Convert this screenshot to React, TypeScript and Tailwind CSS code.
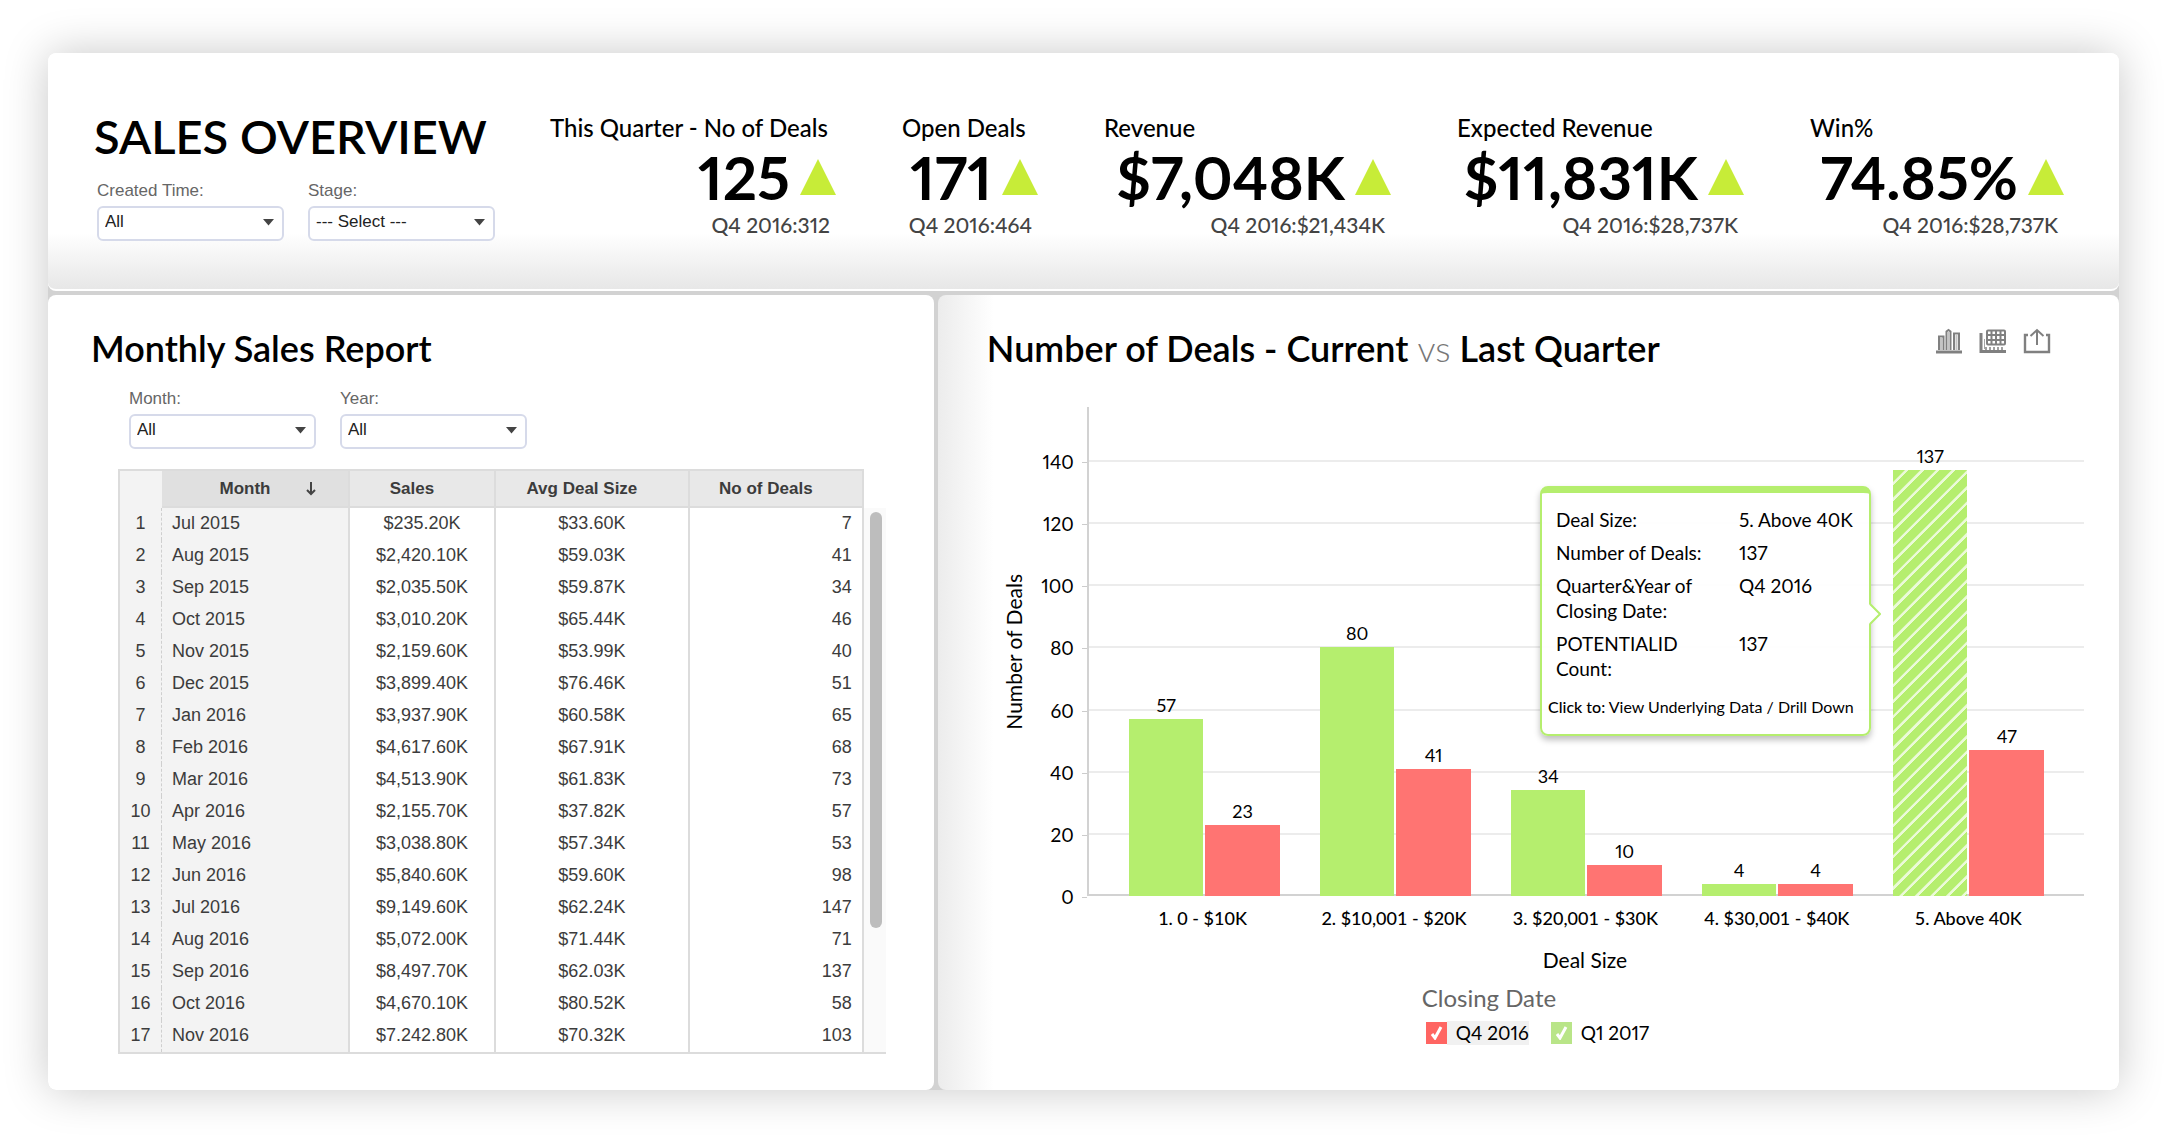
import React from "react";

type Kpi = { label: string; value: string; previous: string; width: string };

const kpis: Kpi[] = [
  { label: "This Quarter - No of Deals", value: "125", previous: "Q4 2016:312", width: "w-[286px]" },
  { label: "Open Deals", value: "171", previous: "Q4 2016:464", width: "w-[136px]" },
  { label: "Revenue", value: "$7,048K", previous: "Q4 2016:$21,434K", width: "w-[287px]" },
  { label: "Expected Revenue", value: "$11,831K", previous: "Q4 2016:$28,737K", width: "w-[287px]" },
  { label: "Win%", value: "74.85%", previous: "Q4 2016:$28,737K", width: "w-[254px]" },
];

const rows: [string, string, string, number][] = [
  ["Jul 2015", "$235.20K", "$33.60K", 7],
  ["Aug 2015", "$2,420.10K", "$59.03K", 41],
  ["Sep 2015", "$2,035.50K", "$59.87K", 34],
  ["Oct 2015", "$3,010.20K", "$65.44K", 46],
  ["Nov 2015", "$2,159.60K", "$53.99K", 40],
  ["Dec 2015", "$3,899.40K", "$76.46K", 51],
  ["Jan 2016", "$3,937.90K", "$60.58K", 65],
  ["Feb 2016", "$4,617.60K", "$67.91K", 68],
  ["Mar 2016", "$4,513.90K", "$61.83K", 73],
  ["Apr 2016", "$2,155.70K", "$37.82K", 57],
  ["May 2016", "$3,038.80K", "$57.34K", 53],
  ["Jun 2016", "$5,840.60K", "$59.60K", 98],
  ["Jul 2016", "$9,149.60K", "$62.24K", 147],
  ["Aug 2016", "$5,072.00K", "$71.44K", 71],
  ["Sep 2016", "$8,497.70K", "$62.03K", 137],
  ["Oct 2016", "$4,670.10K", "$80.52K", 58],
  ["Nov 2016", "$7.242.80K", "$70.32K", 103],
];

const groups = [
  { name: "1. 0 - $10K", green: 57, red: 23 },
  { name: "2. $10,001 - $20K", green: 80, red: 41 },
  { name: "3. $20,001 - $30K", green: 34, red: 10 },
  { name: "4. $30,001 - $40K", green: 4, red: 4 },
  { name: "5. Above 40K", green: 137, red: 47, active: true },
];

const ticks = [0, 20, 40, 60, 80, 100, 120, 140];

/* Height in pixels of a value on the chart's vertical scale. */
const scaleY = (v: number) => Math.round((v * 435) / 140);

function Filter({ id, label, value }: { id: string; label: string; value: string }) {
  return (
    <div className="flex w-[187px] flex-col font-['Liberation_Sans',sans-serif] text-[17px]">
      <label htmlFor={id} className="pb-[3px] leading-6 text-[#666]">
        {label}
      </label>
      <div className="relative">
        <select
          id={id}
          defaultValue={value}
          className="block h-[35px] w-full appearance-none rounded-md border-2 border-[#d6daea] bg-white pb-1 pl-[6px] text-[17px] text-[#222]"
        >
          <option value={value}>{value}</option>
        </select>
        <svg className="pointer-events-none absolute top-[13px] right-[10px] h-[7px] w-[11px]" viewBox="0 0 11 7" aria-hidden="true">
          <path d="M0 0H11L5.5 6.5Z" fill="#444" />
        </svg>
      </div>
    </div>
  );
}

function KpiBlock({ kpi }: { kpi: Kpi }) {
  return (
    <div className={`flex shrink-0 flex-col ${kpi.width}`}>
      <div className="text-[24px] leading-7 font-medium whitespace-nowrap">{kpi.label}</div>
      <div className="flex items-center justify-end gap-[10px] whitespace-nowrap">
        <span className="text-[60px] leading-[70px] font-bold proportional-nums">{kpi.value}</span>
        <svg className="h-9 w-9 shrink-0" viewBox="0 0 36 36" role="img" aria-label="Up">
          <path d="M18 0L36 36H0Z" fill="#c7ec38" />
        </svg>
      </div>
      <div className="pr-[6px] text-right text-[21px] leading-[26px] font-medium whitespace-nowrap text-[#444] proportional-nums">
        {kpi.previous}
      </div>
    </div>
  );
}

function ChartIcon() {
  return (
    <svg className="h-[26px] w-7" viewBox="0 0 28 26" fill="none" stroke="#808080" aria-hidden="true">
      <path d="M4 22V8.5H8.5V22M11.5 22V3.5L13.5 2L15.5 3.5V22M19 22V5.5H24V22" strokeWidth="2" />
      <path d="M6 10V22M13.5 4V22M21.5 7V22" strokeWidth="2" stroke="#c4c4c4" />
      <path d="M1 24H27" strokeWidth="3" />
    </svg>
  );
}

function GridIcon() {
  return (
    <svg className="h-[26px] w-7" viewBox="0 0 28 26" fill="none" stroke="#808080" aria-hidden="true">
      <rect x="8" y="2.5" width="18" height="14" rx="1" strokeWidth="2" />
      <path d="M8 7H26M8 12H26M12.5 2V17M17 2V17M21.5 2V17" strokeWidth="2" />
      <path d="M2 5V23.5H27" strokeWidth="3" />
      <path d="M5.5 11V21" strokeWidth="1" stroke="#a5a5a5" />
      <path d="M6 20.5H26" strokeWidth="3" strokeDasharray="2 2" stroke="#a0a0a0" />
    </svg>
  );
}

function ShareIcon() {
  return (
    <svg className="h-[26px] w-7" viewBox="0 0 28 26" fill="none" stroke="#808080" aria-hidden="true">
      <path d="M5 7H2V24H26V7H23" strokeWidth="2.4" />
      <path d="M14 17V2M7.5 8L14 2L20.5 8" strokeWidth="2" />
    </svg>
  );
}

function Monthly() {
  const line = "border-r-2 border-[#dcdcdc]";
  return (
    <section className="rounded-lg bg-white pt-[33px] pr-12 pb-9 pl-[43px]">
      <h2 className="text-[36px] leading-10 font-semibold">Monthly Sales Report</h2>
      <div className="flex gap-6 pt-[19px] pl-[38px]">
        <Filter id="month" label="Month:" value="All" />
        <Filter id="year" label="Year:" value="All" />
      </div>
      <div className="mt-[20px] ml-[27px] flex font-['Liberation_Sans',sans-serif] text-[#3c3c3c]">
        <table className="grow table-fixed border-separate border-spacing-0 border-b-2 border-l-2 border-[#dcdcdc] text-[18px]">
          <colgroup>
            <col className="w-[42px]" />
            <col className="w-[188px]" />
            <col className="w-[146px]" />
            <col className="w-[194px]" />
            <col className="w-[174px]" />
          </colgroup>
          <thead className="text-[17px]">
            <tr className="h-[39px]">
              <th className="border-t-2 border-[#dcdcdc] bg-[#f3f3f3] p-0" aria-label="Row" />
              <th className={`relative border-y-2 bg-[#e0e0e0] p-0 pr-5 ${line}`}>
                Month
                <svg className="absolute top-[11px] right-[31px] h-[14px] w-3" viewBox="0 0 12 14" fill="none" stroke="#444" strokeWidth="2" aria-hidden="true">
                  <path d="M6 0V12M2 8L6 12L10 8" />
                </svg>
              </th>
              <th className={`border-y-2 bg-[#e8e8e8] p-0 pr-5 ${line}`}>Sales</th>
              <th className={`border-y-2 bg-[#e8e8e8] p-0 pr-5 ${line}`}>Avg Deal Size</th>
              <th className={`border-y-2 bg-[#e8e8e8] p-0 pr-5 ${line}`}>No of Deals</th>
            </tr>
          </thead>
          <tbody>
            {rows.map((r, i) => (
              <tr key={r[0]} className="h-8">
                <td className="border-r border-dashed border-[#cfcfcf] bg-[#f3f3f3] p-0 pb-[2px] text-center">{i + 1}</td>
                <td className={`bg-[#f3f3f3] p-0 pb-[2px] pl-[10px] ${line}`}>{r[0]}</td>
                <td className={`p-0 pb-[2px] text-center ${line}`}>{r[1]}</td>
                <td className={`p-0 pb-[2px] text-center ${line}`}>{r[2]}</td>
                <td className={`p-0 pr-[10px] pb-[2px] text-right ${line}`}>{r[3]}</td>
              </tr>
            ))}
          </tbody>
        </table>
        <div className="mt-[39px] w-[22px] border-b-2 border-[#dcdcdc] bg-[#fafafa] pt-1 pl-[6px]">
          <div className="h-[416px] w-3 rounded-full bg-[#bdbdbd]" />
        </div>
      </div>
    </section>
  );
}

function Bar({ value, className }: { value: number; className: string }) {
  return (
    <div className="flex flex-1 flex-col items-center">
      <span className="pb-[2px] text-[18px] leading-6">{value}</span>
      <div className={`w-full ${className}`} style={{ height: scaleY(value) }} />
    </div>
  );
}

function TooltipRow({ name, value }: { name: string; value: string }) {
  return (
    <>
      <dt>{name}</dt>
      <dd className="whitespace-nowrap">{value}</dd>
    </>
  );
}

function Tooltip() {
  return (
    <div className="absolute top-[79px] right-[213px] h-[250px] w-[331px] rounded-lg border-2 border-t-[7px] border-[#b5ee6e] bg-white/95 pt-[14px] shadow-[0_4px_6px_rgba(0,0,0,0.25)]">
      <dl className="grid grid-cols-[158px_auto] content-start gap-x-[25px] gap-y-2 pl-[14px] text-[19px] leading-[25px]">
        <TooltipRow name="Deal Size:" value="5. Above 40K" />
        <TooltipRow name="Number of Deals:" value="137" />
        <TooltipRow name="Quarter&Year of Closing Date:" value="Q4 2016" />
        <TooltipRow name="POTENTIALID Count:" value="137" />
      </dl>
      <p className="pt-[14px] pl-[6px] text-[16px] leading-6 whitespace-nowrap">
        <span className="font-medium">Click to:</span> View Underlying Data / Drill Down
      </p>
      <svg className="absolute top-[110px] -right-3 h-[22px] w-3" viewBox="0 0 12 22" aria-hidden="true">
        <path d="M0 1L11 11L0 21Z" fill="#fff" />
        <path d="M1 1L11 11L1 21" fill="none" stroke="#b5ee6e" strokeWidth="2" />
      </svg>
    </div>
  );
}

function LegendItem({ id, label, box, text }: { id: string; label: string; box: string; text: string }) {
  return (
    <div className="flex items-center">
      <span className="relative flex">
        <input id={id} type="checkbox" defaultChecked className={`h-[22px] w-[21px] appearance-none ${box}`} />
        <svg className="pointer-events-none absolute top-1 left-1 h-[14px] w-[13px]" viewBox="0 0 13 14" fill="none" stroke="#fff" aria-hidden="true">
          <path d="M2 8L5 12L11 1" strokeWidth="3" />
        </svg>
      </span>
      <label htmlFor={id} className={`pl-[9px] text-[19px] leading-6 ${text}`}>
        {label}
      </label>
    </div>
  );
}

function Deals() {
  return (
    <section className="rounded-lg bg-white bg-linear-to-r from-[#ececec] to-white to-[56px] pt-[33px] pr-[35px] pb-9 pl-[49px]">
      <div className="flex items-start justify-between pr-[33px]">
        <h2 className="text-[36px] leading-10 font-semibold">
          Number of Deals - Current <span className="font-light text-[#777]">vs</span> Last Quarter
        </h2>
        <div className="flex gap-4">
          <button type="button" aria-label="Chart view"><ChartIcon /></button>
          <button type="button" aria-label="Table view"><GridIcon /></button>
          <button type="button" aria-label="Export"><ShareIcon /></button>
        </div>
      </div>

      <div className="flex pt-[39px] proportional-nums">
        <div className="flex w-[54px] items-center justify-center">
          <span className="rotate-180 text-[21px] leading-6 whitespace-nowrap [writing-mode:vertical-rl]">Number of Deals</span>
        </div>
        <div className="relative h-[489px] w-[46px]">
          {ticks.map((t) => (
            <div key={t} className="absolute right-0 flex translate-y-1/2 items-center gap-2 text-[19px] leading-6" style={{ bottom: scaleY(t) - 1 }}>
              {t}
              <span className="h-px w-[5px] bg-[#ccc]" />
            </div>
          ))}
        </div>
        <div className="relative h-[489px] grow border-b-2 border-l-2 border-[#d2d2d2]">
          {ticks.slice(1).map((t) => (
            <div key={t} className="absolute inset-x-0 h-[2px] bg-[#ececec]" style={{ bottom: scaleY(t) - 3 }} />
          ))}
          <div className="absolute inset-x-0 top-0 -bottom-[2px] grid grid-cols-5 items-end px-5">
            {groups.map((g) => (
              <div key={g.name} className="mx-auto flex w-[79%] items-end gap-[2px]">
                <Bar
                  value={g.green}
                  className={
                    g.active
                      ? "bg-[repeating-linear-gradient(135deg,#b5ee6e_0px,#b5ee6e_8px,#ebfad8_9px,#ebfad8_11px)]"
                      : "bg-[#b5ee6e]"
                  }
                />
                <Bar value={g.red} className="bg-[#ff7472]" />
              </div>
            ))}
          </div>
          <Tooltip />
        </div>
      </div>

      <div className="grid grid-cols-5 pt-[10px] pr-5 pl-[120px] text-center text-[18px] leading-6 font-medium whitespace-nowrap">
        {groups.map((g) => (
          <span key={g.name}>{g.name}</span>
        ))}
      </div>
      <div className="pt-[18px] pl-[99px] text-center text-[21px] leading-6">Deal Size</div>
      <fieldset className="mx-auto w-[225px] whitespace-nowrap proportional-nums">
        <legend className="pt-3 text-[24px] leading-7 text-[#666]">Closing Date</legend>
        <div className="flex gap-[22px] pt-[9px] pl-1">
          <LegendItem id="q4" label="Q4 2016" box="bg-[#ff6562]" text="bg-[#f1f1f1]" />
          <LegendItem id="q1" label="Q1 2017" box="bg-[#b9e588]" text="" />
        </div>
      </fieldset>
    </section>
  );
}

export default function App() {
  return (
    <div className="min-h-screen bg-white px-12 py-[53px] font-[Lato,sans-serif] text-black">
      <main className="flex flex-col gap-1 rounded-lg bg-[#d2d2d2] shadow-[0_0_45px_rgba(0,0,0,0.22)]">
        <header className="flex items-start justify-between rounded-lg border-b-2 border-white bg-white bg-linear-to-t from-[#e7e7e7] to-white to-[56px] pt-[58px] pr-[55px] pb-12 pl-[46px]">
          <div className="flex flex-col">
            <h1 className="text-[47px] leading-[50px] font-semibold whitespace-nowrap">SALES OVERVIEW</h1>
            <div className="flex gap-6 pt-[18px] pl-[3px]">
              <Filter id="created" label="Created Time:" value="All" />
              <Filter id="stage" label="Stage:" value="--- Select ---" />
            </div>
          </div>
          <div className="flex gap-[66px] pt-[3px]">
            {kpis.map((k) => (
              <KpiBlock key={k.label} kpi={k} />
            ))}
          </div>
        </header>
        <div className="grid grid-cols-[3fr_4fr] gap-1">
          <Monthly />
          <Deals />
        </div>
      </main>
    </div>
  );
}
